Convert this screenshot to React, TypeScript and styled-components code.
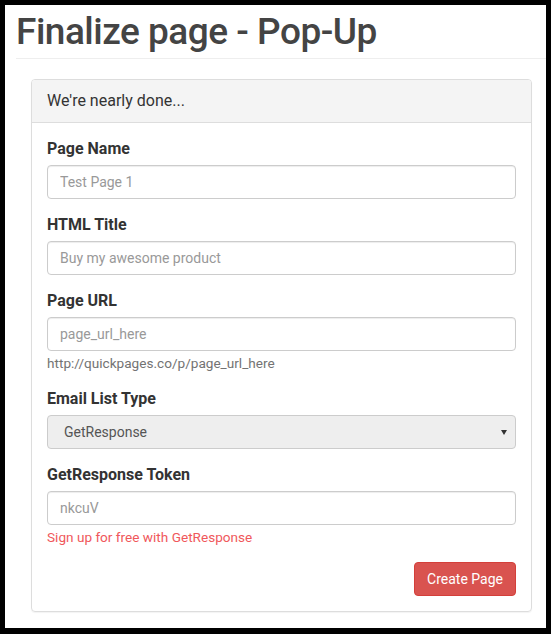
import React from 'react';
import styled, { createGlobalStyle } from 'styled-components';

const GlobalStyle = createGlobalStyle`
  html, body {
    margin: 0;
    padding: 0;
    background: #000;
  }
  body {
    font-family: Roboto, "Liberation Sans", sans-serif;
    color: #333;
  }
  * {
    box-sizing: border-box;
  }
`;

const Frame = styled.div`
  margin: 5px;
  width: 541px;
  height: 623px;
  background: #fff;
  overflow: hidden;
  padding-left: 11px;
`;

const Header = styled.div`
  border-bottom: 1px solid #eee;
  height: 54px;
  padding-top: 2px;
  margin-right: -10px;
`;

const Title = styled.h1`
  margin: 0;
  font-size: 37px;
  line-height: 50px;
  letter-spacing: -0.5px;
  font-weight: 500;
  color: #444;
`;

const Panel = styled.div`
  margin: 20px 14px 0 15px;
  border: 1px solid #ddd;
  border-radius: 4px;
  box-shadow: 0 1px 1px rgba(0, 0, 0, 0.05);
`;

const PanelHeading = styled.div`
  background: #f4f4f4;
  border-bottom: 1px solid #ddd;
  border-radius: 3px 3px 0 0;
  padding: 10px 15px;
  font-size: 16px;
  line-height: 22px;
  color: #333;
`;

const PanelBody = styled.div`
  padding: 15px;
`;

const Group = styled.div`
  margin-bottom: 15px;
`;

const Label = styled.label`
  display: block;
  font-size: 16px;
  line-height: 22px;
  font-weight: 700;
  margin-bottom: 5px;
  color: #333;
`;

const Input = styled.input`
  display: block;
  width: 100%;
  height: 34px;
  padding: 6px 12px;
  font-family: Roboto, "Liberation Sans", sans-serif;
  font-size: 14px;
  color: #555;
  background: #fff;
  border: 1px solid #ccc;
  border-radius: 4px;
  box-shadow: inset 0 1px 1px rgba(0, 0, 0, 0.075);
  outline: none;

  &::placeholder {
    color: #999;
  }
`;

const SelectBox = styled.div`
  display: flex;
  align-items: center;
  justify-content: space-between;
  height: 34px;
  padding: 0 8px 0 16px;
  font-size: 14px;
  color: #555;
  background: #eee;
  border: 1px solid #ccc;
  border-radius: 4px;
`;

const Help = styled.div<{ $tone?: 'muted' | 'danger' }>`
  margin-top: 3px;
  padding-bottom: 1px;
  font-size: 13.6px;
  line-height: 18px;
  color: ${(p) => (p.$tone === 'danger' ? '#f0585b' : '#737373')};
`;

const Actions = styled.div`
  display: flex;
  justify-content: flex-end;
`;

const Button = styled.button`
  height: 34px;
  padding: 0 12px;
  font-family: Roboto, "Liberation Sans", sans-serif;
  font-size: 14px;
  color: #fff;
  background: #d9534f;
  border: 1px solid #d43f3a;
  border-radius: 4px;
`;

const Caret = () => (
  <svg width="6" height="5" viewBox="0 0 6 5">
    <path d="M0 0h6L3 5z" fill="#333" />
  </svg>
);

export default function App() {
  return (
    <>
      <GlobalStyle />
      <Frame>
        <Header>
          <Title>Finalize page - Pop-Up</Title>
        </Header>
        <Panel>
          <PanelHeading>We're nearly done...</PanelHeading>
          <PanelBody>
            <Group>
              <Label>Page Name</Label>
              <Input placeholder="Test Page 1" />
            </Group>
            <Group>
              <Label>HTML Title</Label>
              <Input placeholder="Buy my awesome product" />
            </Group>
            <Group>
              <Label>Page URL</Label>
              <Input placeholder="page_url_here" />
              <Help>http://quickpages.co/p/page_url_here</Help>
            </Group>
            <Group>
              <Label>Email List Type</Label>
              <SelectBox>
                <span>GetResponse</span>
                <Caret />
              </SelectBox>
            </Group>
            <Group>
              <Label>GetResponse Token</Label>
              <Input placeholder="nkcuV" />
              <Help $tone="danger">Sign up for free with GetResponse</Help>
            </Group>
            <Actions>
              <Button>Create Page</Button>
            </Actions>
          </PanelBody>
        </Panel>
      </Frame>
    </>
  );
}
